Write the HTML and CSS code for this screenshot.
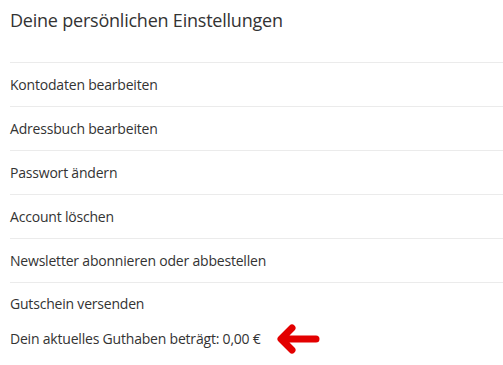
FILE: index.html
```html
<!DOCTYPE html>
<html lang="de">
<head>
    <meta charset="UTF-8">
    <title>Einstellungen</title>
    <link rel="stylesheet" href="styles.css">
</head>
<body>
    <div class="settings">
        <h1>Deine persönlichen Einstellungen</h1>
        <ul class="menu">
            <li><a href="#">Kontodaten bearbeiten</a></li>
            <li><a href="#">Adressbuch bearbeiten</a></li>
            <li><a href="#">Passwort ändern</a></li>
            <li><a href="#">Account löschen</a></li>
            <li><a href="#">Newsletter abonnieren oder abbestellen</a></li>
            <li class="voucher">
                <a href="#">Gutschein versenden</a>
                <div class="balance">
                    Dein aktuelles Guthaben beträgt: 0,00 €
                    <svg class="arrow" width="46" height="34" viewBox="0 0 46 34">
                        <path d="M41 17 H7 M17 6 L6 17 L17 28" fill="none" stroke="#e30000" stroke-width="7" stroke-linecap="round" stroke-linejoin="round"/>
                    </svg>
                </div>
            </li>
        </ul>
    </div>
</body>
</html>
```

FILE: styles.css
```css
body {
    margin: 0;
    background: #fff;
    font-family: "Open Sans", sans-serif;
    color: #333;
}
.settings {
    padding-left: 10px;
}
h1 {
    margin: 0;
    padding-top: 7px;
    height: 55px;
    font-size: 18px;
    font-weight: 400;
    line-height: 26px;
    letter-spacing: -0.22px;
}
.menu {
    list-style: none;
    margin: 0;
    padding: 0;
}
.menu li {
    border-top: 1px solid #ebebeb;
    height: 43px;
    display: flex;
    align-items: center;
}
.menu a {
    color: #333;
    text-decoration: none;
    font-size: 14px;
    letter-spacing: -0.2px;
}
.menu li.voucher {
    height: auto;
    display: block;
    padding: 11px 0 12px;
    border-bottom: 1px solid #e6e6e6;
}
.voucher a {
    display: block;
    line-height: 20px;
}
.balance {
    font-size: 14px;
    letter-spacing: -0.2px;
    line-height: 20px;
    margin-top: 8px;
    display: flex;
    align-items: center;
}
.arrow {
    margin-left: 14px;
}
```
